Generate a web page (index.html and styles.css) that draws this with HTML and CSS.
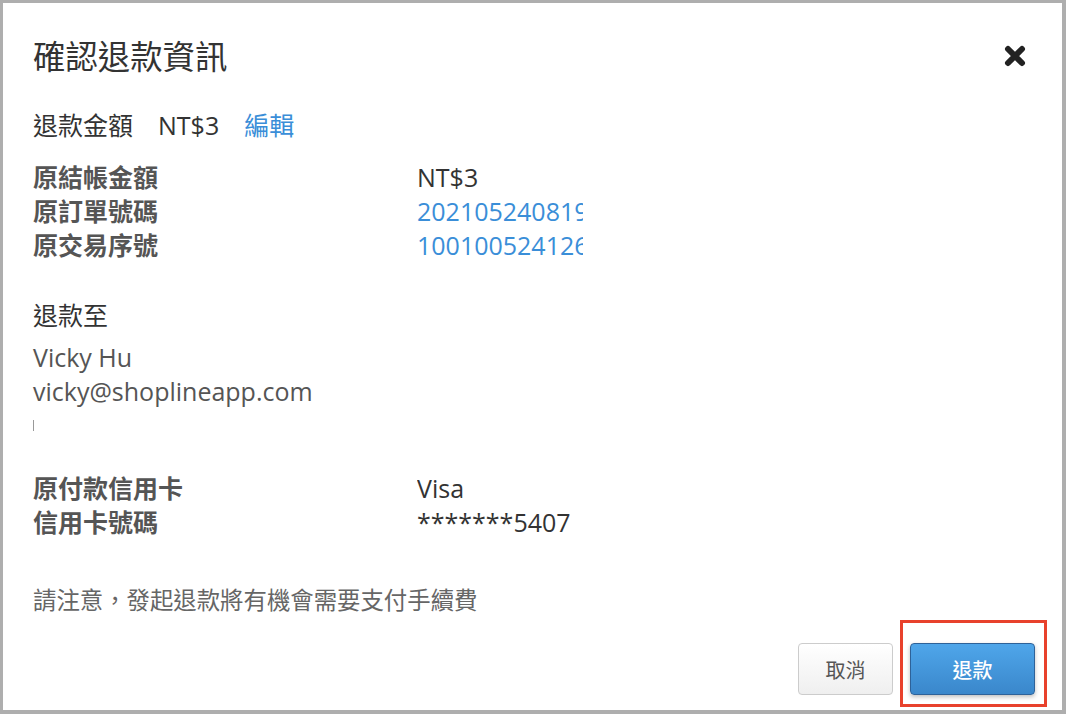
FILE: index.html
```html
<!DOCTYPE html>
<html lang="zh-Hant">
<head>
<meta charset="utf-8">
<title>確認退款資訊</title>
<link rel="stylesheet" href="styles.css">
</head>
<body>
<div class="modal">
  <div class="header">
    <h1 class="title">確認退款資訊</h1>
    <button class="close" aria-label="close">
      <svg width="22" height="22" viewBox="0 0 22 22"><path d="M4 4 L18 18 M18 4 L4 18" stroke="#222" stroke-width="6" stroke-linecap="round" fill="none"/></svg>
    </button>
  </div>
  <div class="amount">
    <span>退款金額</span>
    <span>NT$3</span>
    <a class="link">編輯</a>
  </div>
  <div class="info first">
    <div class="label">原結帳金額</div><div class="value">NT$3</div>
    <div class="label">原訂單號碼</div><div class="value blue">202105240819130</div>
    <div class="label">原交易序號</div><div class="value blue">100100524126012</div>
  </div>
  <div class="section-title">退款至</div>
  <div class="recipient">
    <div class="line">Vicky Hu</div>
    <div class="line">vicky@shoplineapp.com</div>
    <div class="line"><span class="mark"></span></div>
  </div>
  <div class="info card">
    <div class="label">原付款信用卡</div><div class="value">Visa</div>
    <div class="label">信用卡號碼</div><div class="value">*******5407</div>
  </div>
  <div class="note">請注意，發起退款將有機會需要支付手續費</div>
  <div class="footer">
    <button class="btn cancel">取消</button>
    <button class="btn primary">退款</button>
  </div>
  <div class="highlight"></div>
</div>
</body>
</html>
```

FILE: styles.css
```css
html, body {
  margin: 0;
  padding: 0;
  background: #aeaeae;
}
body {
  width: 1066px;
  height: 714px;
  overflow: hidden;
  font-family: "Open Sans", "Noto Sans CJK TC", sans-serif;
  color: #333;
}
.modal {
  position: relative;
  box-sizing: border-box;
  margin: 3px 0 0 3px;
  width: 1059px;
  height: 707px;
  background: #fff;
  display: flex;
  flex-direction: column;
}
.header {
  display: flex;
  align-items: center;
  justify-content: space-between;
  padding: 0 30px;
  margin-top: 31px;
  height: 44px;
}
.title {
  margin: 0;
  font-size: 32.4px;
  line-height: 44px;
  font-weight: 400;
  color: #333;
}
.close {
  width: 34px;
  height: 34px;
  padding: 0;
  border: 0;
  background: none;
  display: flex;
  align-items: center;
  justify-content: center;
}
.amount {
  display: flex;
  gap: 25px;
  padding: 0 30px;
  margin-top: 30px;
  font-size: 25px;
  line-height: 34px;
  color: #333;
}
.link {
  color: #3a8ed8;
}
.info {
  display: grid;
  grid-template-columns: 384px 166px;
  padding: 0 30px;
  font-size: 25px;
  line-height: 34px;
}
.info.first {
  margin-top: 18px;
}
.info.card {
  margin-top: 29px;
}
.label {
  font-weight: 700;
  color: #555;
}
.value {
  white-space: nowrap;
  overflow: hidden;
  color: #333;
}
.value.blue {
  color: #3a8ed8;
}
.section-title {
  padding: 0 30px;
  margin-top: 36px;
  font-size: 25px;
  line-height: 34px;
  color: #333;
}
.recipient {
  padding: 0 30px;
  margin-top: 8px;
  font-size: 25px;
  line-height: 34px;
  color: #555;
}
.line {
  height: 34px;
  display: flex;
  align-items: center;
}
.mark {
  display: block;
  width: 1px;
  height: 11px;
  background: #999;
}
.note {
  padding: 0 30px;
  margin-top: 44px;
  font-size: 23.4px;
  line-height: 34px;
  color: #666;
}
.footer {
  display: flex;
  justify-content: flex-end;
  gap: 17px;
  padding-right: 27px;
  margin-top: 26px;
}
.btn {
  box-sizing: border-box;
  height: 52px;
  border-radius: 4px;
  font-family: "Open Sans", "Noto Sans CJK TC", sans-serif;
  font-size: 20px;
  padding: 0;
}
.cancel {
  width: 95px;
  background: linear-gradient(#ffffff, #efefef);
  border: 1px solid #cccccc;
  color: #555;
}
.primary {
  width: 125px;
  background: linear-gradient(#4fa6ea, #3a87cb);
  border: 1px solid #2e6299;
  color: #fff;
  font-weight: 500;
  box-shadow: 0 2px 4px rgba(0, 0, 0, 0.25);
}
.highlight {
  position: absolute;
  left: 897px;
  top: 617px;
  width: 147px;
  height: 87px;
  box-sizing: border-box;
  border: 3px solid #e8412c;
  pointer-events: none;
}
```
